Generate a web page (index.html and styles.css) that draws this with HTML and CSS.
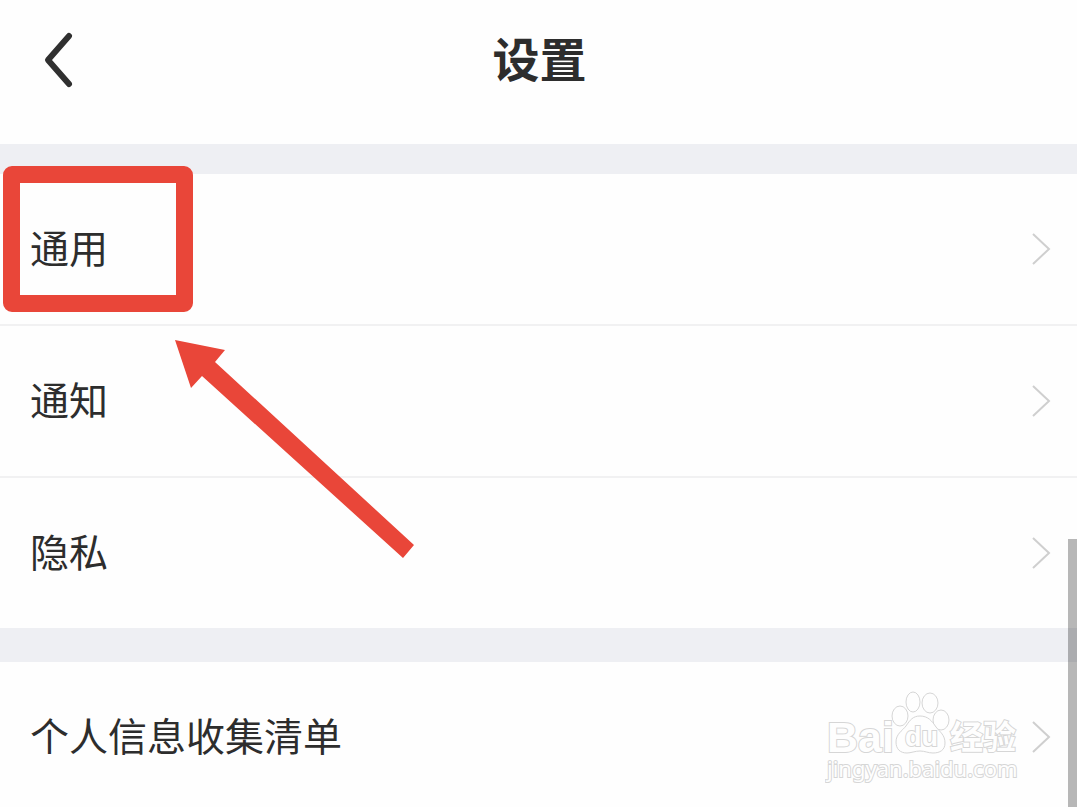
FILE: index.html
```html
<!DOCTYPE html>
<html lang="zh-CN">

<head>
    <meta charset="UTF-8">
    <meta name="viewport" content="width=device-width, initial-scale=1.0">
    <title>设置</title>
    <link rel="stylesheet" href="styles.css">
</head>

<body>
    <div class="screen">
        <header class="header">
            <button class="back-btn" type="button" aria-label="返回">
                <svg width="32" height="60" viewBox="0 0 32 60">
                    <path d="M27 6 L6 30 L27 54" />
                </svg>
            </button>
            <h1>设置</h1>
        </header>

        <main>
            <nav class="group">
                <a class="row" href="#general">
                    <span>通用</span>
                    <svg class="chevron" width="20" height="34" viewBox="0 0 20 34"><path d="M2 2 L18 17 L2 32" /></svg>
                </a>
                <a class="row" href="#notice">
                    <span>通知</span>
                    <svg class="chevron" width="20" height="34" viewBox="0 0 20 34"><path d="M2 2 L18 17 L2 32" /></svg>
                </a>
                <a class="row" href="#privacy">
                    <span>隐私</span>
                    <svg class="chevron" width="20" height="34" viewBox="0 0 20 34"><path d="M2 2 L18 17 L2 32" /></svg>
                </a>
            </nav>
            <nav class="group">
                <a class="row" href="#collection">
                    <span>个人信息收集清单</span>
                    <svg class="chevron" width="20" height="34" viewBox="0 0 20 34"><path d="M2 2 L18 17 L2 32" /></svg>
                </a>
            </nav>
        </main>

        <!-- highlight and arrow -->
        <div class="highlight"></div>
        <svg class="arrow" width="242" height="222" viewBox="0 0 242 222">
            <path d="M1 2 L51 12 L41 24 L240 207 L229 220 L28 38 L17 50 Z" />
        </svg>

        <!-- watermark -->
        <svg class="watermark" width="200" height="100" viewBox="0 0 200 100">
            <text class="brand" x="2" y="61">Bai</text>
            <ellipse cx="75" cy="25" rx="8" ry="10" />
            <ellipse cx="88" cy="11" rx="7" ry="10" />
            <ellipse cx="105" cy="12" rx="8" ry="10" />
            <ellipse cx="116" cy="29" rx="8" ry="10" />
            <path d="M95 25 C103 25 107 30 111 36 C115 41 120 44 120 52 C120 59 115 62 108 62 C103 62 100 60 95 60 C90 60 86 62 82 62 C75 62 71 58 71 51 C71 43 77 40 81 35 C85 29 88 25 95 25 Z" />
            <text class="du" x="80" y="55">du</text>
            <text class="cn" x="125" y="58">经验</text>
            <text class="site" x="2" y="86">jingyan.baidu.com</text>
        </svg>

        <div class="scrollbar"></div>
    </div>
</body>

</html>
```

FILE: styles.css
```css
* {
    box-sizing: border-box;
}

body {
    margin: 0;
    background: #fefefe;
    color: #2d2d2d;
    font-family: "Noto Sans CJK SC", sans-serif;
}

.screen {
    position: relative;
    height: 100vh;
    overflow: hidden;
}

.header {
    display: grid;
    grid-template-columns: 104px 1fr 102px;
    align-items: center;
    padding: 24px 0 48px;
}

.header h1 {
    margin: 0;
    padding-bottom: 6px;
    font-size: 47px;
    line-height: 66px;
    font-weight: 700;
    text-align: center;
}

.back-btn {
    display: flex;
    justify-content: flex-start;
    padding: 0 0 0 42px;
    border: none;
    background: none;
    cursor: pointer;
}

.back-btn path {
    fill: none;
    stroke: #303030;
    stroke-width: 6;
    stroke-linecap: round;
    stroke-linejoin: round;
}

main {
    background: #eeeff3;
    padding-top: 30px;
}

.group {
    background: #fefefe;
    margin-bottom: 34px;
}

.row {
    display: flex;
    align-items: center;
    justify-content: space-between;
    height: 152px;
    padding: 0 26px 0 30px;
    border-bottom: 2px solid #f1f1f2;
    color: inherit;
    font-size: 39px;
    line-height: 56px;
    text-decoration: none;
}

.row span {
    padding-bottom: 6px;
}

.row:last-child {
    height: 150px;
    border-bottom: none;
}

.chevron path {
    fill: none;
    stroke: #cfcfcf;
    stroke-width: 2;
}

.highlight {
    position: absolute;
    left: 3px;
    top: 166px;
    width: 190px;
    height: 146px;
    border: 17px solid #e94639;
    border-radius: 9px;
}

.arrow {
    position: absolute;
    left: 174px;
    top: 338px;
    fill: #e94639;
}

.watermark {
    position: absolute;
    right: 52px;
    bottom: 16px;
    fill: #fefefe;
    stroke: #d6d6d6;
    stroke-width: 1;
    font-family: "Liberation Sans", "Noto Sans CJK SC", sans-serif;
}

.watermark text {
    paint-order: stroke;
    stroke-width: 2;
}

.watermark .brand {
    font-size: 43px;
    font-weight: 700;
}

.watermark .du {
    font-size: 27px;
    font-weight: 700;
}

.watermark .cn {
    font-family: "Noto Sans CJK SC", sans-serif;
    font-size: 33px;
    font-weight: 700;
}

.watermark .site {
    font-family: "Noto Sans", sans-serif;
    font-size: 22px;
}

.scrollbar {
    position: absolute;
    right: 0;
    top: 539px;
    bottom: 0;
    width: 9px;
    background: rgba(0, 0, 0, 0.28);
}
```
